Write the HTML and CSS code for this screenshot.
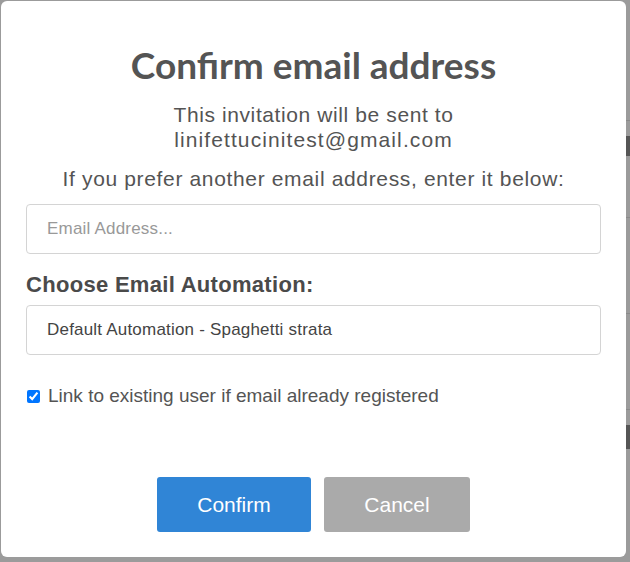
FILE: index.html
```html
<!DOCTYPE html>
<html>
<head>
<meta charset="utf-8">
<link rel="stylesheet" href="styles.css">
</head>
<body>
<div class="backdrop">
  <div class="modal">
    <h2 class="title">Confirm email address</h2>
    <div class="content">
      <p class="sent">This invitation will be sent to<br><span class="email">linifettucinitest@gmail.com</span></p>
      <p class="prefer">If you prefer another email address, enter it below:</p>
      <input class="field" type="text" placeholder="Email Address...">
      <div class="label">Choose Email Automation:</div>
      <div class="field select">Default Automation - Spaghetti strata</div>
      <label class="check">
        <input type="checkbox" checked>
        <span>Link to existing user if email already registered</span>
      </label>
    </div>
    <div class="actions">
      <button class="btn confirm">Confirm</button>
      <button class="btn cancel">Cancel</button>
    </div>
  </div>
  <div class="bg-line l1"></div>
  <div class="bg-line l2"></div>
  <div class="bg-line l3"></div>
  <div class="bg-line l4"></div>
  <div class="bg-block b1"></div>
  <div class="bg-block b2"></div>
</div>
</body>
</html>
```

FILE: styles.css
```css
html, body {
  margin: 0;
  padding: 0;
}
body {
  width: 630px;
  height: 562px;
  overflow: hidden;
  background: #9b9b9b;
  font-family: "Liberation Sans", Arial, sans-serif;
}
.backdrop {
  position: relative;
  width: 630px;
  height: 562px;
  padding: 1px 0 0 1px;
  box-sizing: border-box;
}
.modal {
  position: relative;
  z-index: 2;
  width: 625px;
  height: 556px;
  background: #fff;
  border-radius: 6px;
  box-sizing: border-box;
  padding: 42px 25px 0 25px;
  display: flex;
  flex-direction: column;
}
.title {
  margin: 0;
  font-family: Lato, "Liberation Sans", sans-serif;
  font-weight: 700;
  font-size: 37px;
  line-height: 44px;
  color: #545454;
  text-align: center;
}
.content {
  display: flex;
  flex-direction: column;
}
.sent {
  margin: 15px 0 0 0;
  font-size: 21px;
  line-height: 25px;
  letter-spacing: 0.6px;
  color: #545454;
  text-align: center;
}
.email {
  letter-spacing: 1.1px;
}
.prefer {
  margin: 14px 0 0 0;
  font-size: 21px;
  line-height: 25px;
  letter-spacing: 0.65px;
  color: #545454;
  text-align: center;
}
.field {
  margin: 13px 0 0 0;
  height: 50px;
  width: 575px;
  box-sizing: border-box;
  border: 1px solid #d4d4d4;
  border-radius: 4px;
  padding: 0 20px;
  font-family: "Liberation Sans", Arial, sans-serif;
  font-size: 17px;
  letter-spacing: 0.2px;
  color: #545454;
  background: #fff;
  outline: none;
}
.field::placeholder {
  color: #999;
}
.label {
  margin-top: 19px;
  font-size: 22px;
  font-weight: 700;
  line-height: 24px;
  letter-spacing: 0.3px;
  color: #4a4a4a;
}
.select {
  margin-top: 8px;
  display: flex;
  align-items: center;
  font-size: 17px;
  letter-spacing: 0.2px;
  color: #444;
}
.check {
  margin-top: 30px;
  display: flex;
  align-items: center;
  font-size: 19px;
  color: #545454;
  line-height: 22px;
}
.check input {
  margin: 0 8px 0 1px;
  width: 13px;
  height: 13px;
  accent-color: #0075ff;
}
.actions {
  margin-top: auto;
  margin-bottom: 25px;
  display: flex;
  justify-content: center;
  gap: 13px;
}
.btn {
  height: 55px;
  border: none;
  border-radius: 3px;
  font-family: "Liberation Sans", Arial, sans-serif;
  font-size: 21px;
  color: #fff;
  padding: 0;
}
.confirm {
  width: 154px;
  background: #3085d6;
}
.cancel {
  width: 146px;
  background: #aaaaaa;
}
.bg-line {
  position: absolute;
  right: 0;
  width: 6px;
  height: 1px;
  background: #8a8a8a;
}
.l1 { top: 120px; }
.l2 { top: 217px; }
.l3 { top: 313px; }
.l4 { top: 409px; }
.bg-block {
  position: absolute;
  right: 0;
  width: 4px;
  background: #555;
}
.b1 { top: 136px; height: 20px; }
.b2 { top: 425px; height: 24px; }
```
